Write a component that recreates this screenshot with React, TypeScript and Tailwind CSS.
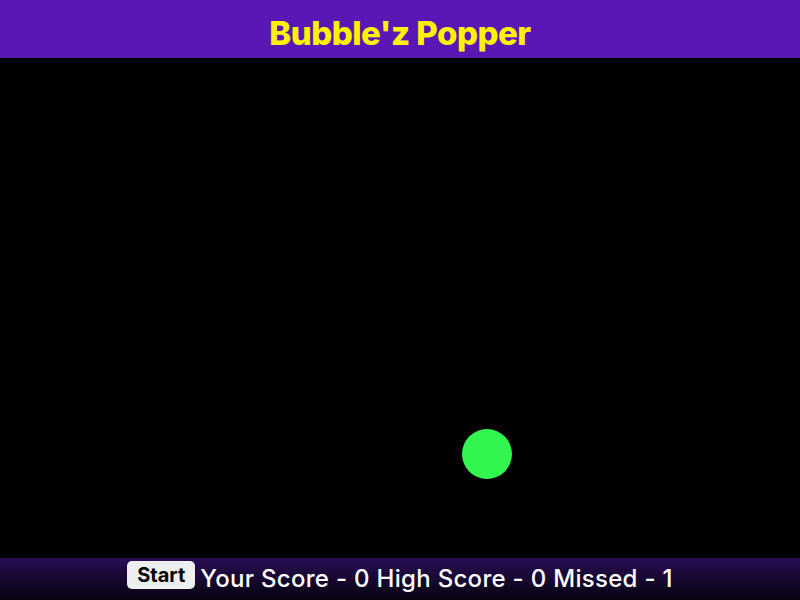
import React from "react";

export default function App() {
  return (
    <div
      className="flex h-[600px] w-[800px] flex-col bg-black"
      style={{ fontFamily: "Inter, 'Noto Sans', sans-serif" }}
    >
      <header className="flex h-[58px] items-center justify-center bg-[#5b17b5] pt-[8px]">
        <h1 className="text-[33px] font-extrabold leading-[40px] tracking-[-0.5px] text-[#fff200]">Bubble'z Popper</h1>
      </header>

      {/* play field */}
      <main className="relative flex-1 bg-black">
        <div className="absolute left-[462px] top-[371px] h-[50px] w-[50px] rounded-full bg-[#33f54f]" />
      </main>

      <footer className="flex h-[42px] items-center justify-center gap-[5px] bg-gradient-to-b from-[#2a0d56] to-[#07030f]">
        <button className="mb-[8px] h-[28px] rounded-[5px] bg-[#eeeeee] px-[10px] text-[20px] font-bold leading-[28px] text-black">
          Start
        </button>
        <span className="text-[24px] font-medium leading-[30px] tracking-[0.3px] text-white">
          Your Score - 0 High Score - 0 Missed - 1
        </span>
      </footer>
    </div>
  );
}
